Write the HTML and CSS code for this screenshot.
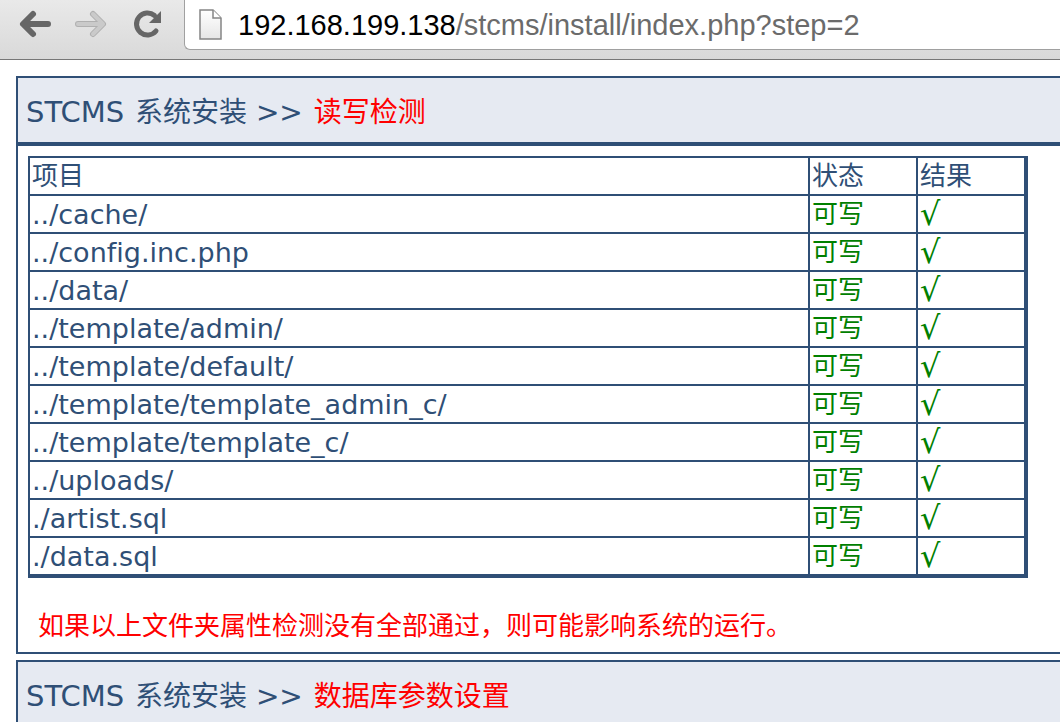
FILE: index.html
```html
<!DOCTYPE html>
<html lang="zh-CN">
<head>
<meta charset="utf-8">
<title>STCMS 系统安装</title>
<link rel="stylesheet" href="styles.css">
</head>
<body>
<header class="toolbar">
  <nav class="nav">
    <button class="nav-button" type="button" aria-label="Back">
      <svg width="34" height="30" viewBox="0 0 34 30"><path class="arrow" d="M30 15H6M15 5L5 15L15 25"/></svg>
    </button>
    <button class="nav-button" type="button" aria-label="Forward" disabled>
      <svg width="34" height="30" viewBox="0 0 34 30"><path class="arrow-edge" d="M4 15H28M19 5L29 15L19 25"/><path class="arrow-faint" d="M4 15H28M19 5L29 15L19 25"/></svg>
    </button>
    <button class="nav-button" type="button" aria-label="Reload">
      <svg width="34" height="30" viewBox="0 0 34 30"><path class="ring" d="M26 22A11 11 0 1 1 24.500 6.500"/><path class="ring-head" d="M31 2V14H19Z"/></svg>
    </button>
  </nav>
  <div class="address">
    <svg class="page-icon" width="24" height="32" viewBox="0 0 24 32">
      <defs><linearGradient id="paper" x1="0" y1="0" x2="0" y2="1"><stop offset="0" stop-color="#fff"/><stop offset="1" stop-color="#e6e6e6"/></linearGradient></defs>
      <path d="M1 1H14L22 9V30H1Z" fill="url(#paper)" stroke="#858585" stroke-width="1.500"/>
      <path d="M14 1V9H22" fill="#fff" stroke="#858585" stroke-width="1.500"/>
    </svg>
    <div class="url" role="textbox" aria-label="Address" contenteditable="true" spellcheck="false"><span class="host">192.168.199.138</span>/stcms/install/index.php?step=2</div>
  </div>
</header>
<main class="page">
  <section class="panel">
    <h1 class="panel-title"><span class="brand">STCMS</span> 系统安装 &gt;&gt; <span class="step">读写检测</span></h1>
    <div class="panel-body">
      <table class="checks">
        <colgroup><col><col class="col-small"><col class="col-small"></colgroup>
        <thead><tr><th scope="col">项目</th><th scope="col">状态</th><th scope="col">结果</th></tr></thead>
        <tbody>
          <tr><td class="path">../cache/</td><td class="ok">可写</td><td class="ok mark">√</td></tr>
          <tr><td class="path">../config.inc.php</td><td class="ok">可写</td><td class="ok mark">√</td></tr>
          <tr><td class="path">../data/</td><td class="ok">可写</td><td class="ok mark">√</td></tr>
          <tr><td class="path">../template/admin/</td><td class="ok">可写</td><td class="ok mark">√</td></tr>
          <tr><td class="path">../template/default/</td><td class="ok">可写</td><td class="ok mark">√</td></tr>
          <tr><td class="path">../template/template_admin_c/</td><td class="ok">可写</td><td class="ok mark">√</td></tr>
          <tr><td class="path">../template/template_c/</td><td class="ok">可写</td><td class="ok mark">√</td></tr>
          <tr><td class="path">../uploads/</td><td class="ok">可写</td><td class="ok mark">√</td></tr>
          <tr><td class="path">./artist.sql</td><td class="ok">可写</td><td class="ok mark">√</td></tr>
          <tr><td class="path">./data.sql</td><td class="ok">可写</td><td class="ok mark">√</td></tr>
        </tbody>
      </table>
      <p class="warning">如果以上文件夹属性检测没有全部通过，则可能影响系统的运行。</p>
    </div>
  </section>
  <section class="panel">
    <h2 class="panel-title"><span class="brand">STCMS</span> 系统安装 &gt;&gt; <span class="step">数据库参数设置</span></h2>
  </section>
</main>
</body>
</html>
```
FILE: styles.css
```css
* { box-sizing: border-box; }

body {
  margin: 0;
  background: #fff;
  color: #2f4f76;
  font: 26px/32px "DejaVu Sans", "Noto Sans CJK SC", sans-serif;
  font-variant-ligatures: none;
  overflow: hidden;
}

.toolbar {
  display: flex;
  height: 60px;
  padding-left: 18px;
  border-bottom: 1px solid #777;
  background: linear-gradient(#e9e9e9, #d9d9d9);
}

.nav {
  display: flex;
  gap: 22px;
  height: 48px;
  align-items: center;
}

.nav-button {
  display: flex;
  padding: 0;
  border: 0;
  background: none;
}

.arrow, .arrow-edge, .arrow-faint, .ring {
  fill: none;
  stroke: #666;
  stroke-width: 6;
  stroke-linecap: round;
  stroke-linejoin: round;
}
.arrow-edge { stroke: #b0b0b0; }
.arrow-faint { stroke: #cacaca; stroke-width: 4; }
.ring { stroke-width: 5; }
.ring-head { fill: #666; }

.address {
  display: flex;
  flex: 1;
  align-items: center;
  gap: 15px;
  height: 50px;
  margin-left: 20px;
  padding-left: 14px;
  border: 1px solid #a0a0a0;
  border-width: 0 0 1px 1px;
  border-radius: 0 0 0 6px;
  background: #fff;
}

.page-icon { flex: none; }

.url {
  flex: 1;
  color: #6b6b6b;
  font: 29px/32px "Liberation Sans", Arial, sans-serif;
  white-space: nowrap;
  outline: 0;
}
.host { color: #000; }

.page {
  display: flex;
  flex-direction: column;
  gap: 6px;
  padding: 16px 0 0 16px;
}

.panel {
  border: 2px solid #2f4f76;
  border-right: 0;
}

.panel-title {
  margin: 0;
  padding: 19px 8px 13px;
  border-bottom: 4px solid #2f4f76;
  background: #e6eaf2;
  font-size: 28px;
  font-weight: 400;
  line-height: 32px;
  word-spacing: normal;
}
.brand {
  margin-right: 2px;
  font-size: 29px;
  line-height: 1;
}

.step, .warning { color: #f00; }
.step { margin-left: 2px; }

.panel-body { padding: 10px; }

.checks {
  width: 100%;
  max-width: 1000px;
  border: 2px solid #2f4f76;
  border-spacing: 0;
  table-layout: fixed;
}
.col-small { width: 108px; }

.checks th, .checks td {
  height: 38px;
  padding: 1px 2px 0;
  border: 0 solid #2f4f76;
  border-width: 0 2px 2px 0;
  font-weight: 400;
  line-height: 35px;
  text-align: left;
}
.checks .path { font-size: 27px; }
.checks .ok { color: green; }
.checks .mark { font-size: 32px; }

.warning {
  margin: 0;
  padding: 33px 10px 0;
  line-height: 31px;
}
```
